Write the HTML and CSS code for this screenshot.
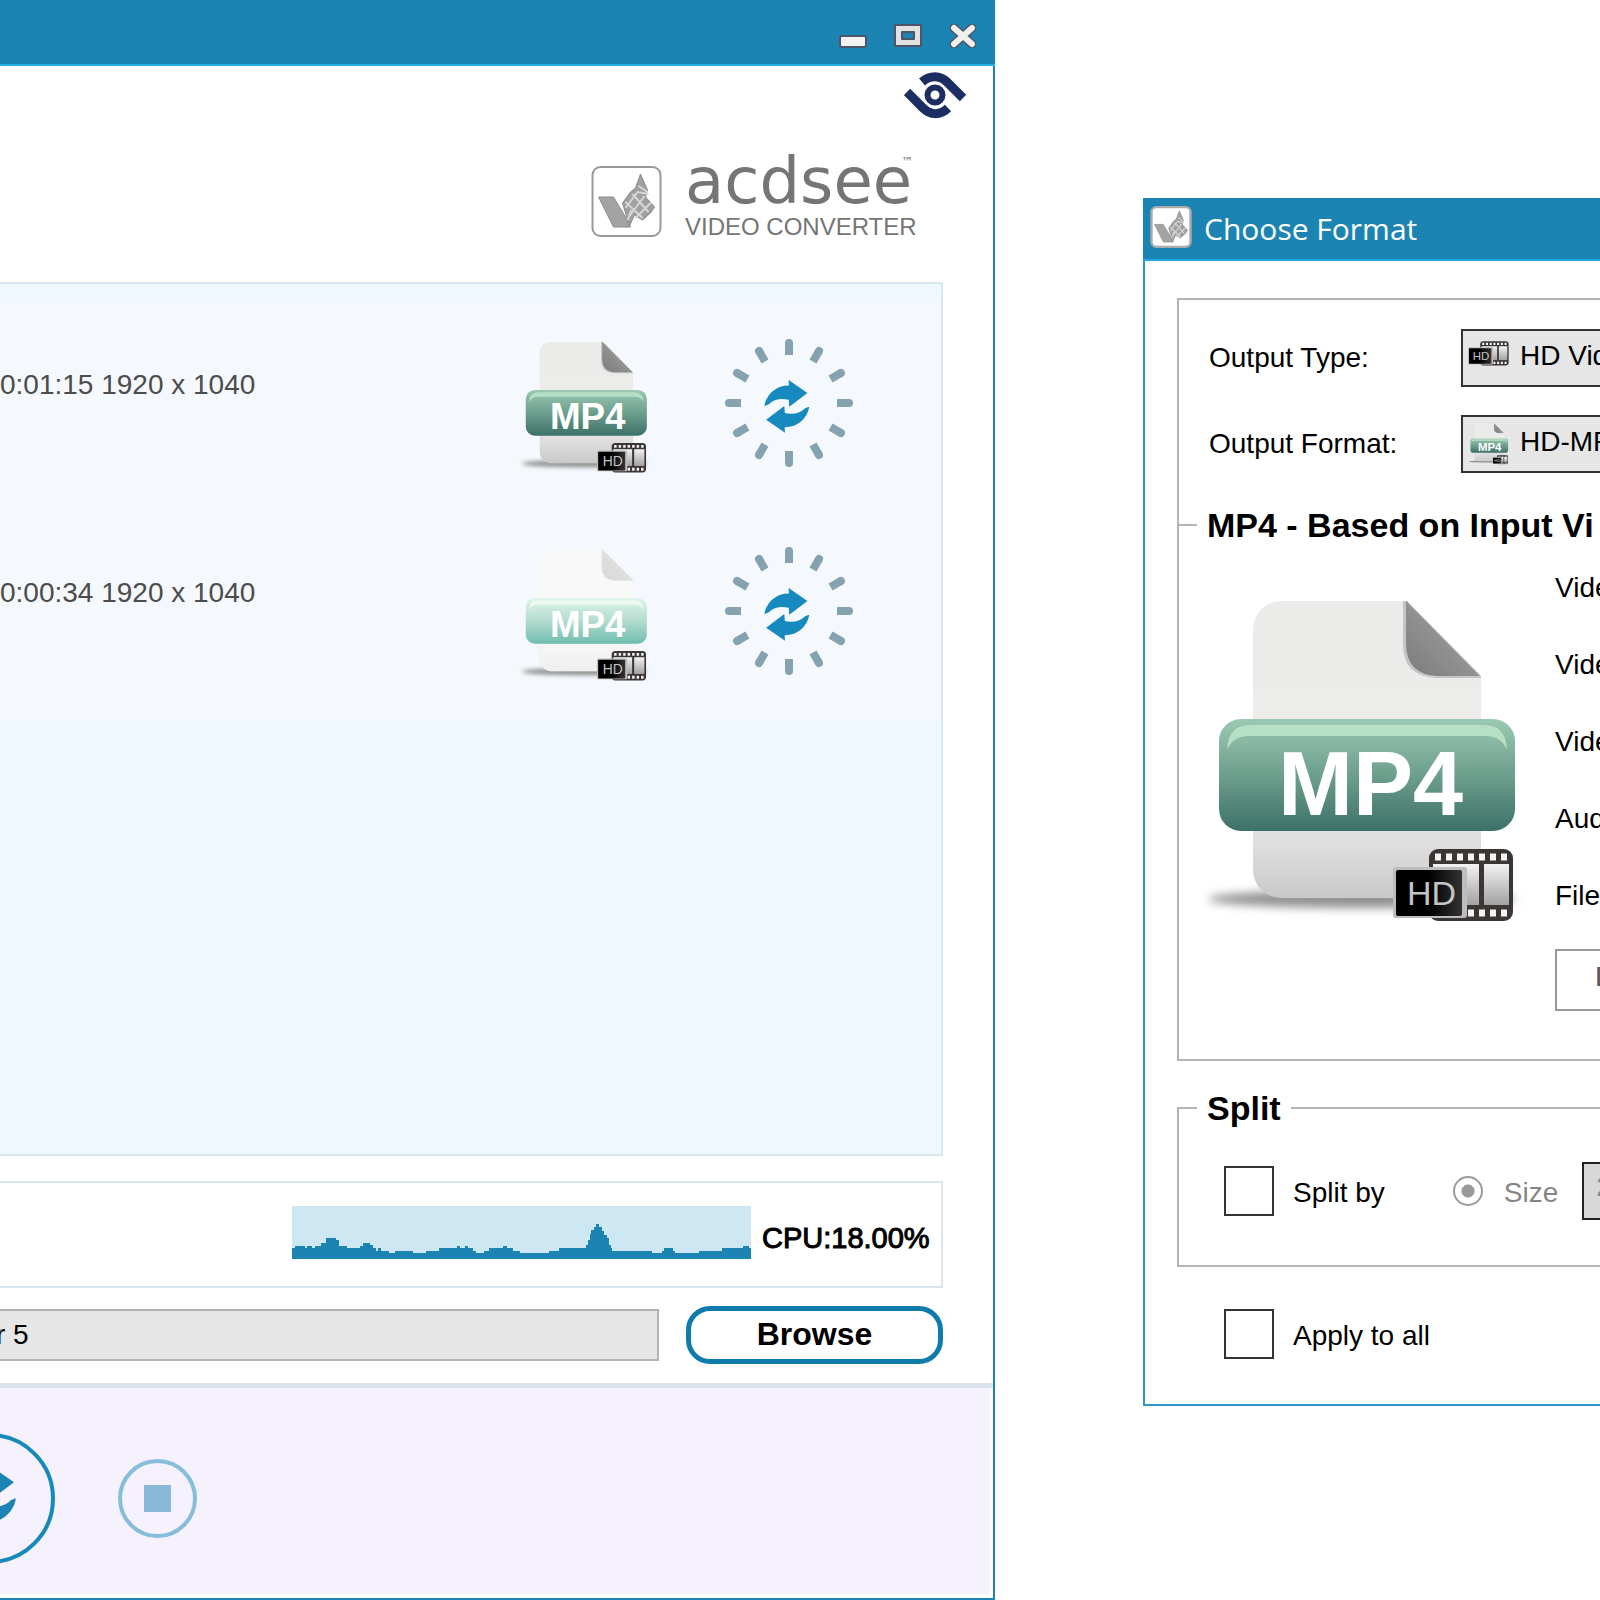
FILE: index.html
```html
<!DOCTYPE html>
<html lang="en">
<head>
<meta charset="utf-8">
<title>ACDSee Video Converter</title>
<link rel="stylesheet" href="styles.css">
</head>
<body>
<svg class="sprites" width="0" height="0" aria-hidden="true">
  <defs>
    <linearGradient id="paper" x1="0" y1="0" x2="0" y2="1"><stop offset="0" stop-color="#ebebea"/><stop offset=".6" stop-color="#ececeb"/><stop offset=".82" stop-color="#dedede"/><stop offset="1" stop-color="#c9c9c8"/></linearGradient>
    <linearGradient id="fold" x1="0" y1="1" x2="1" y2="0"><stop offset="0" stop-color="#7c7c7c"/><stop offset="1" stop-color="#a8a8a8"/></linearGradient>
    <linearGradient id="band" x1="0" y1="0" x2="0" y2="1"><stop offset="0" stop-color="#9bc9b3"/><stop offset=".5" stop-color="#6d9f8d"/><stop offset="1" stop-color="#3c7168"/></linearGradient>
    <linearGradient id="band-soft" x1="0" y1="0" x2="0" y2="1"><stop offset="0" stop-color="#e0f4ea"/><stop offset=".5" stop-color="#b3dccf"/><stop offset="1" stop-color="#6fbcae"/></linearGradient>
    <linearGradient id="frame" x1="0" y1="0" x2="0" y2="1"><stop offset="0" stop-color="#f2f2f2"/><stop offset="1" stop-color="#a2a2a2"/></linearGradient>
    <linearGradient id="plate" x1="0" y1="0" x2="1" y2="0"><stop offset=".5" stop-color="#000"/><stop offset="1" stop-color="#333"/></linearGradient>
    <filter id="soft" x="-20%" y="-80%" width="140%" height="260%"><feGaussianBlur stdDeviation="5"/></filter>
  </defs>
  <symbol id="page" viewBox="0 0 330 330">
    <ellipse cx="162" cy="302" rx="154" ry="9" fill="#909090" filter="url(#soft)"/>
    <path id="sheet" d="M81 4H207L281 79V275A26 26 0 0 1 255 301H81A28 28 0 0 1 53 273V32A28 28 0 0 1 81 4Z" fill="url(#paper)"/>
    <path d="M203 4V48Q203 79 236 81H281V79L207 4Z" fill="#c5c5c5"/>
    <path d="M206 4L280 79H238Q206 78 206 46Z" fill="url(#fold)"/>
  </symbol>
  <symbol id="badge" viewBox="193 243 124 80">
    <rect x="229" y="248" width="84" height="72" rx="9" fill="#3b3534"/>
    <path d="M235 256H310M235 312H310" stroke="#f4f4f4" stroke-width="7" stroke-dasharray="6 5"/>
    <rect x="233" y="263" width="46" height="41" fill="url(#frame)"/>
    <rect x="284" y="263" width="25" height="41" fill="url(#frame)"/>
    <rect x="193" y="266" width="74" height="51" rx="3" fill="#bdbdbd"/>
    <rect x="196" y="269" width="66" height="46" rx="2" fill="url(#plate)"/>
    <text class="hd-text" x="207" y="304">HD</text>
  </symbol>
  <symbol id="mp4" viewBox="0 0 330 330">
    <use href="#page" width="330" height="330"/>
    <rect x="19" y="122" width="296" height="112" rx="22" fill="url(#band)"/>
    <path d="M27 153Q28 128 50 128H284Q306 128 307 153Q301 139 286 139H48Q33 139 27 153Z" fill="#b7dfc5"/>
    <text class="mp4-text" x="78" y="218">MP4</text>
    <use href="#badge" x="193" y="247" width="124" height="80"/>
  </symbol>
  <symbol id="mp4-soft" viewBox="0 0 330 330">
    <use href="#page" width="330" height="330"/>
    <path d="M81 4H207L281 79V275A26 26 0 0 1 255 301H81A28 28 0 0 1 53 273V32A28 28 0 0 1 81 4Z" fill="#fff" opacity=".7"/>
    <rect x="19" y="122" width="296" height="112" rx="22" fill="url(#band-soft)"/>
    <path d="M27 153Q28 128 50 128H284Q306 128 307 153Q301 139 286 139H48Q33 139 27 153Z" fill="#edf8ef"/>
    <text class="mp4-text" x="78" y="218">MP4</text>
    <use href="#badge" x="193" y="247" width="124" height="80"/>
  </symbol>
  <symbol id="arrows" viewBox="0 0 46 53">
    <path id="arrow" d="M.5 26C1 21 4 15 9 11C14 7 19 5.500 25 5.600L24.600 0L43.500 13L25.300 26.700L24.700 19.700C17 18 10 19 4.500 24.500Z"/>
    <use href="#arrow" transform="rotate(180 22.800 26.400)"/>
  </symbol>
  <symbol id="spinner" viewBox="-64 -64 128 128">
    <g id="half" stroke="#84a2af" stroke-width="8">
      <g id="ray"><path d="M0-60V-48"/><path d="M0-60V-59" stroke-linecap="round"/></g>
      <use href="#ray" transform="rotate(30)"/><use href="#ray" transform="rotate(60)"/>
      <use href="#ray" transform="rotate(90)"/><use href="#ray" transform="rotate(120)"/><use href="#ray" transform="rotate(150)"/>
    </g>
    <use href="#half" transform="rotate(180)"/>
    <use href="#arrows" x="-25" y="-23" width="46" height="53" fill="#1689be"/>
  </symbol>
  <symbol id="mark" viewBox="0 0 70 71">
    <path d="M7 31H22L34 51L39 61H22Z" fill="#a3a3a3" stroke="#8c8c8c"/>
    <path d="M31 37L39 26L44 22L49 8L56 24L54 31L63 41L59 47L51 54L43 49L38 60Z" fill="#a0a0a0" stroke="#8c8c8c"/>
    <path d="M34 42L46 26L57 28M38 50L53 30M44 52L60 36M34 36L51 52M41 28L57 46M47 20L56 26M36 54L40 44" fill="none" stroke="#d6d6d6" stroke-width="2"/>
  </symbol>
</svg>

<div class="desktop">
  <main class="converter">
    <header class="titlebar">
      <button class="win-btn" aria-label="Minimize"><svg width="28" height="24" viewBox="0 0 28 24"><rect x="1" y="12" width="26" height="11" rx="2" fill="#f2f2f2" stroke="#4f5468" stroke-width="2"/></svg></button>
      <button class="win-btn" aria-label="Maximize"><svg width="28" height="24" viewBox="0 0 28 24"><path d="M1 1H27V22H1ZM8 8V15H20V8Z" fill="#e2e2e2" fill-rule="evenodd" stroke="#4f5468" stroke-width="2" stroke-linejoin="round"/></svg></button>
      <button class="win-btn" aria-label="Close"><svg width="28" height="24" viewBox="0 0 28 24"><path d="M5 4L23 20M23 4L5 20" stroke="#4f5468" stroke-width="9" stroke-linecap="round"/><path d="M5 4L23 20M23 4L5 20" stroke="#f0f0f0" stroke-width="6" stroke-linecap="round"/></svg></button>
    </header>
    <div class="client">
      <div class="branding">
        <svg class="eye" width="63" height="47" viewBox="0 0 63 47" fill="none" stroke="#1c2d61"><path d="M18 10C26 3 36 3 43 10L59 26M44 36C36 44 26 43 19 36L3 20" stroke-width="9"/><circle cx="31" cy="23" r="7.500" stroke-width="6"/></svg>
        <div class="brand">
          <svg class="brand-mark" width="71" height="71" viewBox="0 0 70 71"><rect x="1" y="1" width="68" height="69" rx="8" fill="#fff" stroke="#999" stroke-width="2"/><use href="#mark" width="70" height="71"/></svg>
          <div class="brand-name">
            <span class="brand-top">acdsee<sup>™</sup></span>
            <span class="brand-sub">VIDEO CONVERTER</span>
          </div>
        </div>
      </div>

      <section class="files">
        <article class="file">
          <p class="file-info">0:01:15 1920 x 1040</p>
          <svg class="file-icon" width="135" height="135"><use href="#mp4"/></svg>
          <svg width="128" height="130"><use href="#spinner"/></svg>
        </article>
        <article class="file">
          <p class="file-info">0:00:34 1920 x 1040</p>
          <svg class="file-icon" width="135" height="135"><use href="#mp4-soft"/></svg>
          <svg width="128" height="130"><use href="#spinner"/></svg>
        </article>
      </section>

      <section class="status">
        <svg class="chart" width="459" height="53" viewBox="0 0 459 53" shape-rendering="crispEdges">
          <path d="M0 53V42H3V40H13V42H15V40H20V42H23V40H29V37H34V32H44V34H47V40H55V42H68V40H71V37H78V39H81V42H84V45H86V42H89V45H97V47H103V45H121V47H134V45H147V42H165V40H168V42H173V40H176V42H181V45H184V47H192V45H197V42H211V40H215V42H221V45H228V47H257V45H267V42H294V39H296V34H298V28H299V24H302V21H304V18H307V21H310V25H312V29H315V32H317V39H319V42H320V45H360V47H370V45H372V42H381V45H383V47H407V45H430V42H451V40H457V42H459V53Z"/>
        </svg>
        <span class="cpu">CPU:18.00%</span>
      </section>

      <div class="output">
        <input class="path" type="text" value="r 5" aria-label="Output folder">
        <button class="browse">Browse</button>
      </div>

      <footer class="actions">
        <div class="actions-bar">
          <button class="convert" aria-label="Convert"><svg width="54" height="62" viewBox="0 0 46 53"><use href="#arrows" width="46" height="53"/></svg></button>
          <button class="stop" aria-label="Stop"><span></span></button>
        </div>
      </footer>
    </div>
  </main>

  <aside class="dialog">
    <header class="dialog-title">
      <svg width="42" height="42" viewBox="0 0 70 71"><rect x="2" y="2" width="66" height="67" rx="8" fill="#fff" stroke="#aaa" stroke-width="4"/><use href="#mark" width="70" height="71"/></svg>
      <h1>Choose Format</h1>
    </header>
    <form class="dialog-body">
      <div class="formats">
        <label for="type">Output Type:</label>
        <div class="picker"><select id="type"><option>HD Vid</option></select><svg width="42" height="32"><use href="#badge"/></svg></div>
        <label for="format">Output Format:</label>
        <div class="picker"><select id="format"><option>HD-MP</option></select><svg width="42" height="42"><use href="#mp4"/></svg></div>
      </div>
      <fieldset class="details">
        <legend>MP4 - Based on Input Vi</legend>
        <div class="details-grid">
          <svg width="330" height="330"><use href="#mp4"/></svg>
          <div class="props">
            <ul><li>Vide</li><li>Vide</li><li>Vide</li><li>Aud</li><li>File</li></ul>
            <button class="detail-btn" type="button">D</button>
          </div>
        </div>
      </fieldset>
      <fieldset class="split">
        <legend>Split</legend>
        <div class="split-row">
          <label class="check"><input type="checkbox"><span>Split by</span></label>
          <label class="radio"><input type="radio" checked disabled><span>Size</span></label>
          <input class="size" type="text" value="2" disabled aria-label="Split size">
        </div>
      </fieldset>
      <label class="check apply"><input type="checkbox"><span>Apply to all</span></label>
    </form>
  </aside>
</div>
</body>
</html>
```
FILE: styles.css
```css
* { box-sizing: border-box; }

body {
  margin: 0;
  background: #fff;
  color: #000;
  font: 28px/32px "Liberation Sans", Arial, sans-serif;
}

button, input, select { font: inherit; color: inherit; margin: 0; }
button { padding: 0; background: none; border: 0; }
svg { display: block; }

.sprites { position: absolute; }
.hd-text { font: 34px "Liberation Sans", sans-serif; fill: #c4c4c4; }
.mp4-text { font: bold 90px "Liberation Sans", sans-serif; fill: #fff; }

.desktop {
  display: grid;
  grid-template-columns: 995fr 605fr;
  min-height: 100vh;
  overflow: hidden;
}

/* Converter window */
.converter { display: flex; flex-direction: column; min-width: 0; }

.titlebar {
  display: flex;
  justify-content: flex-end;
  gap: 27px;
  height: 66px;
  padding: 24px 18px 0;
  background: #1c84b3;
  border-bottom: 2px solid #27aee6;
}
.win-btn { height: 24px; }

.client {
  flex: 1;
  display: flex;
  flex-direction: column;
  min-width: 0;
  border: solid #1c84b3;
  border-width: 0 2px 2px 0;
}

.branding {
  display: flex;
  flex-direction: column;
  align-items: flex-end;
  height: 216px;
  padding-top: 6px;
}
.eye { margin-right: 26px; }
.brand {
  display: flex;
  gap: 23px;
  margin: 28px 80px 0 0;
  color: #757575;
}
.brand-mark { margin-top: 19px; }
.brand-name { display: flex; flex-direction: column; width: 228px; }
.brand-top {
  position: relative;
  font: 64px/68px "DejaVu Sans", sans-serif;
  white-space: nowrap;
}
.brand-top sup {
  position: absolute;
  top: 9px;
  right: 0;
  font-size: 12px;
  line-height: 12px;
}
.brand-sub {
  margin-top: -2px;
  font-size: 24px;
  line-height: 28px;
  white-space: nowrap;
}

.files {
  flex: 1;
  margin-right: 50px;
  padding-top: 19px;
  background: #f0f8ff;
  border: solid #d9e6ee;
  border-width: 2px 2px 2px 0;
}
.file {
  display: grid;
  grid-template-columns: 1fr 135px 128px;
  column-gap: 72px;
  align-items: start;
  height: 208px;
  padding: 35px 88px 0 0;
  background: #f5f9fd;
}
.file-info { margin: 0; padding-top: 31px; color: #4c4c4c; }
.file-icon { margin-top: 2px; }

.status {
  display: flex;
  justify-content: flex-end;
  align-items: center;
  gap: 11px;
  height: 107px;
  margin: 25px 50px 0 0;
  padding: 0 11px 4px 0;
  border: solid #d9e4ec;
  border-width: 2px 2px 2px 0;
}
.chart { background: #cde7f3; fill: #1c84b3; }
.cpu {
  width: 168px;
  padding-top: 10px;
  font-size: 29px;
  -webkit-text-stroke: 1px #000;
}

.output {
  display: flex;
  align-items: center;
  gap: 27px;
  margin: 18px 50px 19px 0;
}
.path {
  flex: 1;
  min-width: 0;
  height: 52px;
  padding: 0;
  background: #e6e6e6;
  border: solid #b4b4b4;
  border-width: 2px 2px 2px 0;
  border-radius: 0;
  text-indent: -4px;
}
.browse {
  width: 257px;
  height: 58px;
  padding-bottom: 2px;
  border: 5px solid #0f7bac;
  border-radius: 24px;
  background: #fff;
  font-size: 32px;
  font-weight: bold;
}

.actions { border-top: 5px solid #dae4ea; padding: 0 3px 4px 0; }
.actions-bar {
  display: flex;
  align-items: center;
  gap: 63px;
  height: 206px;
  padding-top: 14px;
  background: #f5f1fd;
}
.convert {
  display: grid;
  place-items: center;
  width: 131px;
  height: 131px;
  margin-left: -76px;
  border: 4px solid #1689bb;
  border-radius: 50%;
  fill: #1c84b3;
}
.stop {
  display: grid;
  place-items: center;
  width: 79px;
  height: 79px;
  border: 4px solid #85bddb;
  border-radius: 50%;
}
.stop span { width: 27px; height: 27px; background: #88b9d8; }

/* Choose Format dialog */
.dialog {
  align-self: start;
  min-width: 0;
  margin: 198px 0 0 148px;
}
.dialog-title {
  display: flex;
  align-items: center;
  gap: 12px;
  height: 63px;
  padding: 0 7px 4px;
  background: #1c84b3;
  border-bottom: 2px solid #22a7e0;
  color: #fff;
}
.dialog-title h1 {
  margin: 0;
  padding-top: 4px;
  font: 30px/40px "Open Sans", sans-serif;
  white-space: nowrap;
}
.dialog-body {
  padding: 37px 0 45px 32px;
  border: solid #2f94c6;
  border-width: 0 0 2px 2px;
}
.formats {
  display: grid;
  grid-template-columns: 252px 1fr;
  row-gap: 28px;
  align-items: center;
  height: 227px;
  align-content: start;
  padding: 29px 0 0 30px;
  border: solid #b4b4b4;
  border-width: 2px 0 0 2px;
}
.picker { position: relative; min-width: 0; }
.picker svg { position: absolute; left: 7px; top: 8px; }
.picker select {
  appearance: none;
  display: block;
  width: 100%;
  height: 58px;
  padding: 0 0 4px 57px;
  background: #e6e6e6;
  border: solid #333;
  border-width: 2px 0 2px 2px;
  border-radius: 0;
}

fieldset {
  min-width: 0;
  margin: 0;
  padding: 0;
  border: solid #b4b4b4;
  border-width: 2px 0 2px 2px;
}
legend {
  margin-left: 18px;
  padding: 0 10px;
  font-size: 34px;
  line-height: 36px;
  font-weight: bold;
  white-space: nowrap;
}
.details { height: 554px; margin-top: -18px; }
.details-grid {
  display: grid;
  grid-template-columns: 330px 1fr;
  column-gap: 25px;
  padding-left: 21px;
}
.details-grid > svg { margin-top: 54px; }
.props { min-width: 0; padding-top: 6px; }
.props ul { margin: 0; padding: 0; list-style: none; line-height: 77px; }
.props li { height: 77px; }
.detail-btn {
  display: block;
  width: 100%;
  height: 62px;
  margin-top: 15px;
  padding: 0 0 6px 38px;
  border: solid #999;
  border-width: 2px 0 2px 2px;
  color: #555;
  text-align: left;
}

.split { margin-top: 29px; height: 177px; }
.split-row { display: flex; align-items: center; padding: 36px 0 0 45px; }
.check { display: flex; align-items: center; gap: 19px; white-space: nowrap; }
.check span, .radio span { padding-top: 4px; }
.check input {
  appearance: none;
  width: 50px;
  height: 50px;
  border: 2px solid #333;
  background: #fff;
}
.radio {
  display: flex;
  align-items: center;
  gap: 21px;
  margin: 0 24px 0 68px;
  color: #858585;
}
.radio input {
  appearance: none;
  width: 30px;
  height: 30px;
  border: 2px solid #999;
  border-radius: 50%;
  background: radial-gradient(circle, #999 6px, #fff 7px);
}
.size {
  flex: 1;
  width: 0;
  min-width: 0;
  height: 58px;
  padding: 0 0 8px 12px;
  border: solid #222;
  border-width: 2px 0 2px 2px;
  border-radius: 0;
  background: #d8d8d8;
  color: #8a8a8a;
}
.apply { margin: 42px 0 0 47px; }
```
